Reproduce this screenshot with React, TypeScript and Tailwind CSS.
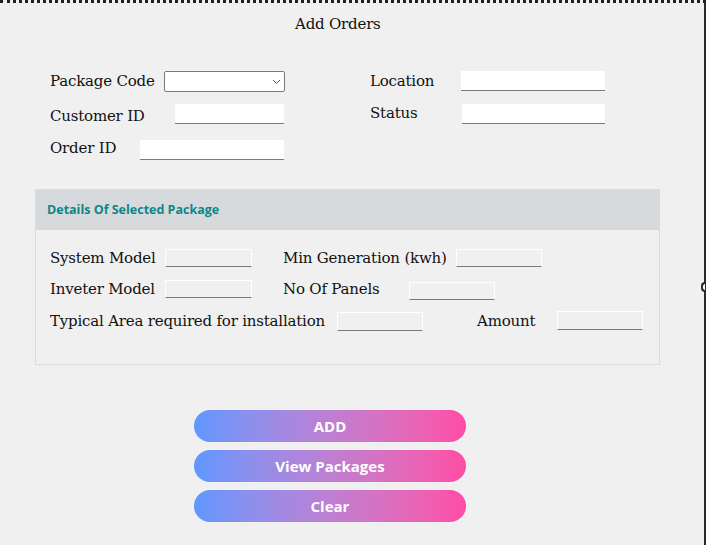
const serif = { fontFamily: '"DejaVu Serif", "Liberation Serif", serif' };

function TextBox({ className }: { className: string }) {
  return <div className={`bg-white border-b border-[#7a7a7a] shrink-0 ${className}`} />;
}

function ReadBox({ className }: { className: string }) {
  return (
    <div className={`bg-[#f0f0f0] border border-white border-b-[#7a7a7a] shrink-0 ${className}`} />
  );
}

function GradButton({ label }: { label: string }) {
  return (
    <button className="w-[272px] h-[32px] rounded-full bg-gradient-to-r from-[#5e97ff] to-[#ff4ca5] text-white font-bold text-[15px] font-['Open_Sans',sans-serif] flex items-center justify-center">
      {label}
    </button>
  );
}

export default function App() {
  return (
    <div className="w-[706px] h-[545px] bg-[#f0f0f0] relative overflow-hidden border-t-[3px] border-dotted border-[#222]">
      <div className="absolute top-0 right-0 w-[2px] h-full bg-[#2a2a2a]" />
      <div className="absolute top-[279px] right-[1px] w-[4px] h-[10px] border-l-2 border-y-2 border-[#2a2a2a] rounded-l-sm bg-white" />

      <div className="text-[#111] text-[15px] tracking-[-0.2px]" style={serif}>
        <div className="pl-[295px] pt-[10px] h-[68px]">Add Orders</div>

        <div className="flex h-[33px]">
          <div className="w-[370px] pl-[50px] flex items-start">
            <span className="w-[114px] leading-[20px] whitespace-nowrap">Package Code</span>
            <div className="w-[121px] h-[21px] bg-white border border-[#7a7a7a] rounded-[2px] flex items-center justify-end pr-[3px]">
              <svg width="9" height="6" viewBox="0 0 9 6" fill="none" stroke="#555" strokeWidth="1">
                <path d="M1 1l3.5 3.5L8 1" />
              </svg>
            </div>
          </div>
          <div className="flex items-start">
            <span className="w-[91px] leading-[20px] whitespace-nowrap">Location</span>
            <TextBox className="w-[144px] h-[20px]" />
          </div>
        </div>

        <div className="flex h-[36px]">
          <div className="w-[370px] pl-[50px] flex items-start">
            <span className="w-[125px] leading-[20px] mt-[2px] whitespace-nowrap">Customer ID</span>
            <TextBox className="w-[109px] h-[20px]" />
          </div>
          <div className="flex items-start">
            <span className="w-[92px] leading-[20px] -mt-[1px] whitespace-nowrap">Status</span>
            <TextBox className="w-[143px] h-[20px]" />
          </div>
        </div>

        <div className="flex h-[49px]">
          <div className="w-[370px] pl-[50px] flex items-start">
            <span className="w-[90px] leading-[20px] -mt-[2px] whitespace-nowrap">Order ID</span>
            <TextBox className="w-[144px] h-[20px]" />
          </div>
        </div>

        <div className="ml-[35px] w-[625px] h-[176px] border border-[#d9dcdf]">
          <div className="h-[40px] bg-[#d6dadd] flex items-center pl-[11px] text-[#0f8585] font-bold text-[12.5px] tracking-normal font-['Open_Sans',sans-serif]">
            Details Of Selected Package
          </div>
          <div className="pt-[19px] pl-[14px]">
            <div className="flex items-center h-[18px]">
              <span className="w-[115px] whitespace-nowrap">System Model</span>
              <ReadBox className="w-[87px] h-[18px]" />
              <span className="ml-[31px] w-[173px] whitespace-nowrap">Min Generation (kwh)</span>
              <ReadBox className="w-[86px] h-[18px]" />
            </div>
            <div className="flex items-center h-[18px] mt-[13px]">
              <span className="w-[115px] whitespace-nowrap">Inveter Model</span>
              <ReadBox className="w-[87px] h-[18px]" />
              <span className="ml-[31px] w-[126px] whitespace-nowrap">No Of Panels</span>
              <ReadBox className="w-[86px] h-[18px] mt-[3px]" />
            </div>
            <div className="flex items-center h-[19px] mt-[14px]">
              <span className="w-[287px] whitespace-nowrap">Typical Area required for installation</span>
              <ReadBox className="w-[86px] h-[19px]" />
              <span className="ml-[54px] w-[80px] whitespace-nowrap">Amount</span>
              <ReadBox className="w-[86px] h-[19px] -mt-[3px]" />
            </div>
          </div>
        </div>
      </div>

      <div className="mt-[45px] pl-[194px] flex flex-col gap-[8px]">
        <GradButton label="ADD" />
        <GradButton label="View Packages" />
        <GradButton label="Clear" />
      </div>
    </div>
  );
}
